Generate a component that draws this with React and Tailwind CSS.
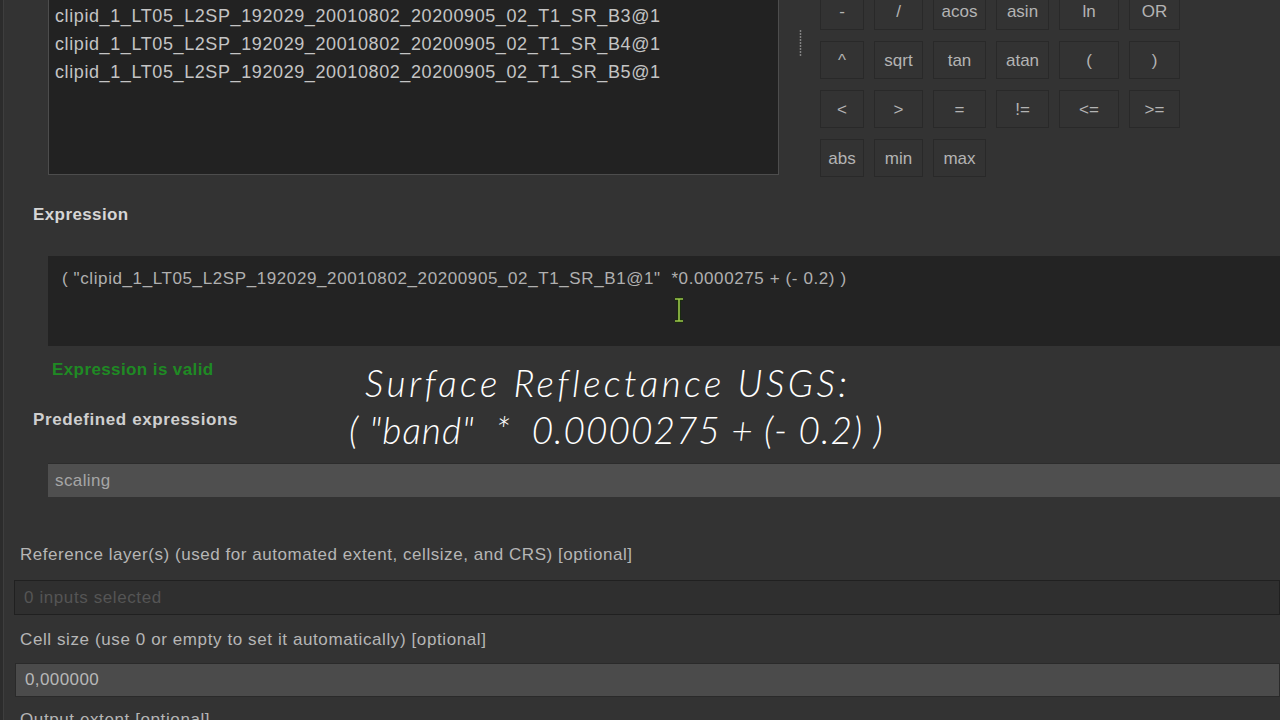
import React from 'react'

const buttonRows = [
  ['-', '/', 'acos', 'asin', 'ln', 'OR'],
  ['^', 'sqrt', 'tan', 'atan', '(', ')'],
  ['<', '>', '=', '!=', '<=', '>='],
  ['abs', 'min', 'max'],
]

const layers = ['B3', 'B4', 'B5']

function CursorBeam() {
  return (
    <svg width="12" height="26" viewBox="0 0 12 26" className="absolute left-[625px] top-[41px]">
      <path d="M2 2h8M2 24h8M6 2v22" stroke="#1a2a10" strokeWidth="4" fill="none" />
      <path d="M2 2h8M2 24h8M6 2v22" stroke="#9cc94a" strokeWidth="1.6" fill="none" />
    </svg>
  )
}

function SplitterDots() {
  return (
    <svg width="3" height="26" viewBox="0 0 3 26" className="mt-[30px] shrink-0">
      {[1, 4, 7, 10, 13, 16, 19, 22, 25].map((y) => (
        <circle key={y} cx="1.5" cy={y} r="0.9" fill="#8a8a8a" />
      ))}
    </svg>
  )
}

export default function App() {
  return (
    <div
      className="relative h-[720px] w-[1280px] overflow-hidden bg-[#2c2c2c]"
      style={{ fontFamily: '"Liberation Sans", Arial, sans-serif' }}
    >
      <div className="ml-[3px] flex h-full flex-col border-l border-[#3e3e3e] bg-[#333333]">
        {/* layer list + operator buttons */}
        <div className="flex h-[190px] shrink-0 items-start">
          <div className="ml-[44px] mt-[-2px] h-[177px] w-[731px] shrink-0 border border-[#4d4d4d] bg-[#222222] pl-[6px] pt-[3px]">
            {layers.map((b) => (
              <div key={b} className="h-[28px] text-[18px] leading-[28px] tracking-[0.6px] text-[#c4c4c4] whitespace-nowrap">
                clipid_1_LT05_L2SP_192029_20010802_20200905_02_T1_SR_{b}@1
              </div>
            ))}
          </div>
          <div className="ml-[20px] flex">
            <SplitterDots />
          </div>
          <div className="ml-[18px] mt-[-8px] grid grid-cols-[44px_49px_53px_53px_60px_51px] gap-x-[10px] gap-y-[11px]">
            {buttonRows.flat().map((label, i) => (
              <div
                key={i}
                className="flex h-[38px] items-center justify-center border border-[#292929] bg-[#333333] pt-[2px] text-[17px] text-[#b4b4b4]"
              >
                {label}
              </div>
            ))}
          </div>
        </div>

        {/* expression */}
        <div className="ml-[29px] flex h-[50px] shrink-0 items-center text-[17px] font-bold tracking-[0.4px] text-[#d6d6d6]">
          Expression
        </div>
        <div className="relative ml-[44px] mt-[16px] h-[90px] shrink-0 bg-[#232323] pl-[14px] pt-[13px]">
          <div className="text-[17px] leading-[20px] text-[#b0b0b0] whitespace-nowrap tracking-[0.6px]">
            ( "clipid_1_LT05_L2SP_192029_20010802_20200905_02_T1_SR_B1@1"&nbsp;&nbsp;*0.0000275 + (- 0.2) )
          </div>
          <CursorBeam />
        </div>
        <div className="ml-[48px] flex h-[48px] shrink-0 items-center text-[17px] font-bold tracking-[0.4px] text-[#1f8a24]">
          Expression is valid
        </div>
        <div className="ml-[29px] flex h-[52px] shrink-0 items-center text-[17px] font-bold tracking-[0.6px] text-[#cfcfcf]">
          Predefined expressions
        </div>
        <div className="ml-[44px] mt-[17px] flex h-[34px] shrink-0 items-center border-t border-[#2c2c2c] bg-[#4f4f4f] pl-[7px] text-[17px] tracking-[0.4px] text-[#a6a6a6]">
          scaling
        </div>

        {/* parameters */}
        <div className="ml-[16px] mt-[46px] flex h-[24px] shrink-0 items-center text-[17px] tracking-[0.55px] text-[#b6b6b6] whitespace-nowrap">
          Reference layer(s) (used for automated extent, cellsize, and CRS) [optional]
        </div>
        <div className="ml-[10px] mt-[13px] flex h-[35px] shrink-0 items-center border border-[#202020] bg-[#2f2f2f] pl-[9px] text-[17px] tracking-[0.6px] text-[#555555]">
          0 inputs selected
        </div>
        <div className="ml-[16px] mt-[13px] flex h-[24px] shrink-0 items-center text-[17px] tracking-[0.6px] text-[#b6b6b6] whitespace-nowrap">
          Cell size (use 0 or empty to set it automatically) [optional]
        </div>
        <div className="ml-[11px] mt-[11px] flex h-[34px] shrink-0 items-center border border-[#2a2a2a] bg-[#4b4b4b] pl-[9px] text-[17px] tracking-[0.4px] text-[#b8b8b8]">
          0,000000
        </div>
        <div className="ml-[16px] mt-[11px] flex h-[24px] shrink-0 items-center text-[17px] tracking-[0.6px] text-[#b6b6b6] whitespace-nowrap">
          Output extent [optional]
        </div>
      </div>

      {/* video caption overlay */}
      <div
        className="absolute left-[349px] top-[359px] text-[37px] italic font-light leading-[47px] text-white whitespace-nowrap"
        style={{ fontFamily: 'Lato, "Open Sans", sans-serif' }}
      >
        <div className="pl-[16px] tracking-[3.4px]">Surface Reflectance USGS:</div>
        <div className="tracking-[1px]">( "band"&nbsp;&nbsp;*&nbsp;&nbsp;0.0000275 + (- 0.2) )</div>
      </div>
    </div>
  )
}
